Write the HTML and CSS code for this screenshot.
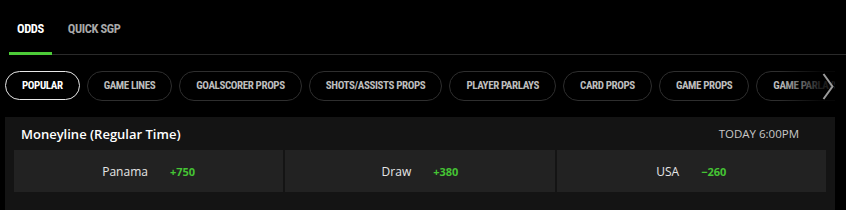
FILE: index.html
```html
<!DOCTYPE html>
<html>
<head>
<meta charset="utf-8">
<link rel="stylesheet" href="styles.css">
</head>
<body>
<nav class="tabs">
  <div class="tab active">ODDS</div>
  <div class="tab">QUICK SGP</div>
</nav>
<div class="pills-wrap">
  <div class="pills">
    <div class="pill active">POPULAR</div>
    <div class="pill">GAME LINES</div>
    <div class="pill">GOALSCORER PROPS</div>
    <div class="pill">SHOTS/ASSISTS PROPS</div>
    <div class="pill">PLAYER PARLAYS</div>
    <div class="pill">CARD PROPS</div>
    <div class="pill">GAME PROPS</div>
    <div class="pill">GAME PARLAYS</div>
  </div>
  <div class="fade">
    <svg class="chev" width="12" height="27" viewBox="0 0 12 27"><path d="M1.5 1 L10.5 13.5 L1.5 26" fill="none" stroke="#9a9a9a" stroke-width="2"/></svg>
  </div>
</div>
<section class="card">
  <div class="card-head">
    <span class="title">Moneyline (Regular Time)</span>
    <span class="time">TODAY 6:00PM</span>
  </div>
  <div class="outcomes">
    <div class="outcome"><span class="name">Panama</span><span class="odds">+750</span></div>
    <div class="outcome"><span class="name">Draw</span><span class="odds">+380</span></div>
    <div class="outcome"><span class="name">USA</span><span class="odds">−260</span></div>
  </div>
</section>
</body>
</html>
```
FILE: styles.css
```css
html, body {
  margin: 0;
  background: #000;
  height: 100%;
  overflow: hidden;
}
body {
  font-family: "Open Sans", "Liberation Sans", sans-serif;
  color: #fff;
}
.tabs {
  display: flex;
  margin-left: 9px;
  border-bottom: 1px solid #2a2a2a;
  font-family: "Roboto Condensed", "Roboto", sans-serif;
  font-weight: 700;
  font-size: 12.5px;
  letter-spacing: -0.4px;
}
.tab {
  padding: 21px 8px 15px;
  line-height: 16px;
  color: #a8a8a8;
  margin-bottom: -1px;
  border-bottom: 3px solid transparent;
  margin-right: 8px;
}
.tab.active {
  color: #fff;
  border-bottom-color: #4ccb38;
}
.pills-wrap {
  position: relative;
  margin: 16px 11px 0 5px;
  overflow: hidden;
}
.pills {
  display: flex;
  gap: 7px;
  white-space: nowrap;
}
.pill {
  flex: none;
  height: 28px;
  line-height: 28px;
  padding: 0 16px;
  border: 1px solid #2e2e2e;
  border-radius: 15px;
  font-family: "Roboto Condensed", "Roboto", sans-serif;
  font-weight: 700;
  font-size: 11px;
  letter-spacing: -0.4px;
  color: #bdbdbd;
}
.pill.active {
  border: 1.5px solid #e8e8e8;
  height: 27px;
  line-height: 27px;
  color: #fff;
}
.fade {
  position: absolute;
  top: 0;
  right: 0;
  width: 56px;
  height: 30px;
  background: linear-gradient(to right, rgba(0,0,0,0), rgba(0,0,0,0.85) 75%);
  display: flex;
  align-items: center;
  justify-content: flex-end;
}
.chev {
  display: block;
  margin-right: 1px;
}
.card {
  margin: 16px 11px 0 5px;
  background: #141414;
  padding: 0 9px 30px;
}
.card-head {
  display: flex;
  justify-content: space-between;
  align-items: center;
  height: 33px;
  padding: 0 27px 0 7px;
}
.title {
  font-weight: 600;
  font-size: 13px;
}
.time {
  font-size: 11.5px;
  color: #c8c8c8;
}
.outcomes {
  display: grid;
  grid-template-columns: 1fr 1fr 1fr;
  gap: 2px;
}
.outcome {
  height: 42px;
  background: #222;
  display: flex;
  align-items: center;
  justify-content: center;
  gap: 22px;
}
.name {
  font-size: 12px;
  color: #e6e6e6;
}
.odds {
  font-size: 11px;
  font-weight: 700;
  color: #45c434;
}
```
